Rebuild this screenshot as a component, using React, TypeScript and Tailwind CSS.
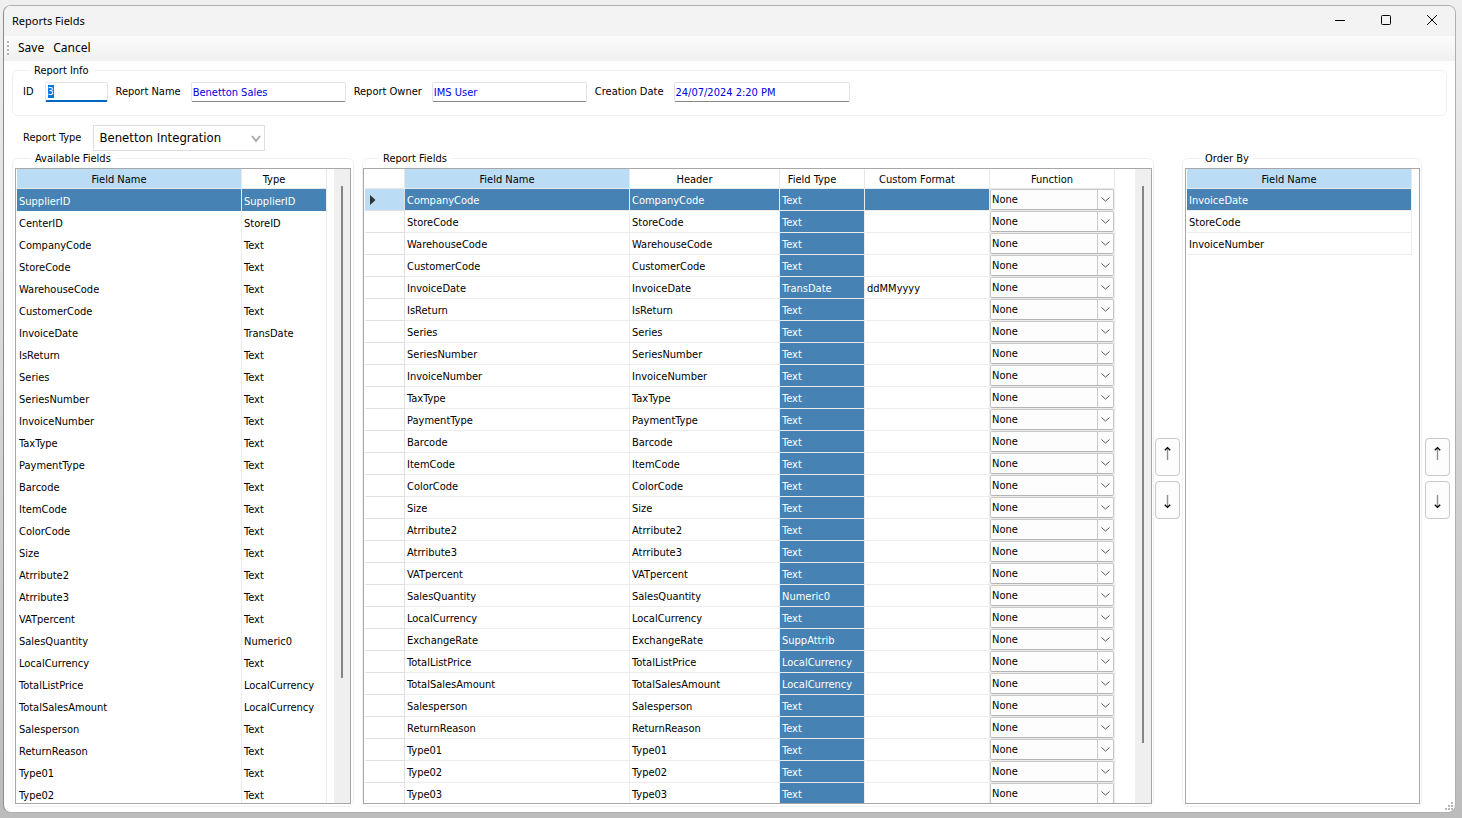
import React, { useEffect, useRef } from 'react';

const functions = ['None', 'Sum', 'Count', 'Average', 'Min', 'Max'];

const availableFields: [string, string][] = [
    ['SupplierID', 'SupplierID'],
    ['CenterID', 'StoreID'],
    ['CompanyCode', 'Text'],
    ['StoreCode', 'Text'],
    ['WarehouseCode', 'Text'],
    ['CustomerCode', 'Text'],
    ['InvoiceDate', 'TransDate'],
    ['IsReturn', 'Text'],
    ['Series', 'Text'],
    ['SeriesNumber', 'Text'],
    ['InvoiceNumber', 'Text'],
    ['TaxType', 'Text'],
    ['PaymentType', 'Text'],
    ['Barcode', 'Text'],
    ['ItemCode', 'Text'],
    ['ColorCode', 'Text'],
    ['Size', 'Text'],
    ['Atrribute2', 'Text'],
    ['Atrribute3', 'Text'],
    ['VATpercent', 'Text'],
    ['SalesQuantity', 'Numeric0'],
    ['LocalCurrency', 'Text'],
    ['TotalListPrice', 'LocalCurrency'],
    ['TotalSalesAmount', 'LocalCurrency'],
    ['Salesperson', 'Text'],
    ['ReturnReason', 'Text'],
    ['Type01', 'Text'],
    ['Type02', 'Text'],
];

const reportFields: { name: string; type: string; format?: string }[] = [
    { name: 'CompanyCode', type: 'Text' },
    { name: 'StoreCode', type: 'Text' },
    { name: 'WarehouseCode', type: 'Text' },
    { name: 'CustomerCode', type: 'Text' },
    { name: 'InvoiceDate', type: 'TransDate', format: 'ddMMyyyy' },
    { name: 'IsReturn', type: 'Text' },
    { name: 'Series', type: 'Text' },
    { name: 'SeriesNumber', type: 'Text' },
    { name: 'InvoiceNumber', type: 'Text' },
    { name: 'TaxType', type: 'Text' },
    { name: 'PaymentType', type: 'Text' },
    { name: 'Barcode', type: 'Text' },
    { name: 'ItemCode', type: 'Text' },
    { name: 'ColorCode', type: 'Text' },
    { name: 'Size', type: 'Text' },
    { name: 'Atrribute2', type: 'Text' },
    { name: 'Atrribute3', type: 'Text' },
    { name: 'VATpercent', type: 'Text' },
    { name: 'SalesQuantity', type: 'Numeric0' },
    { name: 'LocalCurrency', type: 'Text' },
    { name: 'ExchangeRate', type: 'SuppAttrib' },
    { name: 'TotalListPrice', type: 'LocalCurrency' },
    { name: 'TotalSalesAmount', type: 'LocalCurrency' },
    { name: 'Salesperson', type: 'Text' },
    { name: 'ReturnReason', type: 'Text' },
    { name: 'Type01', type: 'Text' },
    { name: 'Type02', type: 'Text' },
    { name: 'Type03', type: 'Text' },
];

const orderBy = ['InvoiceDate', 'StoreCode', 'InvoiceNumber'];

const Th: React.FC<{
    active?: boolean;
    sortable?: boolean;
    children?: React.ReactNode;
}> = ({ active, sortable = true, children }) => (
    <th
        className={`h-5 border-r border-b border-[#e8e8e8] p-0 pt-[3px] text-center leading-4 font-normal ${
            sortable ? 'pr-5' : ''
        } ${active ? 'bg-[#badcf4]' : 'bg-white'}`}
    >
        {children}
    </th>
);

const Td: React.FC<{
    selected?: boolean;
    lines?: boolean;
    children?: React.ReactNode;
}> = ({ selected, lines = true, children }) => (
    <td
        className={`h-[22px] border-r border-[#ececec] p-0 pl-0.5 leading-4 whitespace-nowrap ${
            lines ? 'border-b pt-[3px]' : 'pt-1'
        } ${selected ? 'bg-[#4682b4] text-white' : ''}`}
    >
        {children}
    </td>
);

const ScrollBar: React.FC<{ thumb: string }> = ({ thumb }) => (
    <div className="flex w-4 shrink-0 justify-center bg-[#efefef] pt-[17px]">
        <div className={`w-0.5 bg-[#858585] ${thumb}`} />
    </div>
);

const Group: React.FC<{
    title: string;
    className: string;
    children: React.ReactNode;
}> = ({ title, className, children }) => (
    <fieldset
        className={`flex min-h-0 min-w-0 flex-col rounded-md border border-[#f0f0f0] pt-[3px] pb-0.5 ${className}`}
    >
        <legend className="ml-4 px-1 pt-0.5 leading-3">{title}</legend>
        <div className="flex min-h-0 flex-1 overflow-hidden border border-[#a8a8a8] pl-px">
            {children}
        </div>
    </fieldset>
);

const InfoField: React.FC<{
    id: string;
    label: string;
    value: string;
    width: string;
}> = ({ id, label, value, width }) => (
    <div className="flex items-center gap-2.5">
        <label htmlFor={id}>{label}</label>
        <input
            id={id}
            defaultValue={value}
            className={`h-5 rounded-xs border border-[#e5e5e5] border-b-[#868686] bg-white px-px text-[#0000e0] outline-none ${width}`}
        />
    </div>
);

const FunctionSelect: React.FC<{ label: string }> = ({ label }) => (
    <div className="relative h-[21px] w-[124px]">
        <select
            aria-label={label}
            className="h-full w-full appearance-none rounded-xs border border-[#c8c8c8] border-b-[#b4b4b4] bg-[#fdfdfd] px-px pt-0.5 outline-none"
        >
            {functions.map((name) => (
                <option key={name}>{name}</option>
            ))}
        </select>
        <span className="pointer-events-none absolute inset-y-px right-px flex w-4 items-center justify-center border-l border-[#c8c8c8]">
            <svg
                width="9"
                height="5"
                viewBox="0 0 9 5"
                fill="none"
                stroke="#555"
            >
                <path d="M.5.5l4 3.6 4-3.6" />
            </svg>
        </span>
    </div>
);

const MoveButtons: React.FC = () => (
    <div className="mx-px flex w-[25px] shrink-0 flex-col justify-center gap-[5px] pb-0.5">
        <button
            aria-label="Move up"
            className="flex h-[38px] items-start justify-center rounded border border-[#c8c8c8] bg-[#fdfdfd] pt-[7px]"
        >
            <svg width="9" height="14" viewBox="0 0 9 14">
                <path d="M4.5 2v12" stroke="#8a9494" strokeWidth="1.4" />
                <path
                    d="M1.8 4.2l2.7-2.6 2.7 2.6"
                    fill="none"
                    stroke="#000"
                    strokeWidth="1.4"
                />
            </svg>
        </button>
        <button
            aria-label="Move down"
            className="flex h-[38px] items-end justify-center rounded border border-[#c8c8c8] bg-[#fdfdfd] pb-[9px]"
        >
            <svg width="9" height="14" viewBox="0 0 9 14">
                <path d="M4.5 0v12" stroke="#8a9494" strokeWidth="1.4" />
                <path
                    d="M1.8 9.8l2.7 2.6 2.7-2.6"
                    fill="none"
                    stroke="#000"
                    strokeWidth="1.4"
                />
            </svg>
        </button>
    </div>
);

const TitleBar: React.FC = () => (
    <header className="flex h-[30px] shrink-0 items-center justify-between bg-[#f3f3f3] pl-2 font-['Noto_Sans',sans-serif]">
        <h1>Reports Fields</h1>
        <div className="flex h-full">
            <button
                aria-label="Minimize"
                className="flex w-[46px] items-center justify-center pb-0.5"
            >
                <svg width="10" height="10" stroke="#000">
                    <path d="M0 5.5h10" />
                </svg>
            </button>
            <button
                aria-label="Maximize"
                className="flex w-[46px] items-center justify-center pb-0.5"
            >
                <svg width="10" height="10" fill="none" stroke="#000">
                    <rect x=".5" y=".5" width="9" height="9" rx="1" />
                </svg>
            </button>
            <button
                aria-label="Close"
                className="flex w-[46px] items-center justify-center pb-0.5"
            >
                <svg width="10" height="10" stroke="#000">
                    <path d="M0 0l10 10M10 0L0 10" />
                </svg>
            </button>
        </div>
    </header>
);

const App: React.FC = () => {
    const idRef = useRef<HTMLInputElement>(null);

    useEffect(() => {
        idRef.current?.focus();
        idRef.current?.select();
    }, []);

    return (
        <div className="flex h-screen flex-col bg-linear-to-b from-[#efefef] to-[#bcbcbc] pt-[5px] pr-1.5 pb-[5px] pl-[3px] font-['DejaVu_Sans_Condensed','DejaVu_Sans',sans-serif] text-[11px] text-black">
            <div className="relative flex min-h-0 flex-1 flex-col overflow-hidden rounded-lg border border-[#b0b0b0] border-l-[#8c8c8c] bg-white">
                <TitleBar />

                <nav className="flex h-[25px] shrink-0 items-center bg-linear-to-b from-[#fcfcfc] to-[#f0f0f0] pb-px pl-[3px] font-['Noto_Sans',sans-serif] text-xs">
                    <div className="mr-[9px] h-3.5 w-0.5 bg-[repeating-linear-gradient(#b4b4b4_0_2px,transparent_2px_4px)]" />
                    <button className="mr-[9px]">Save</button>
                    <button>Cancel</button>
                </nav>

                <main className="flex min-h-0 flex-1 flex-col px-2 pt-0.5 pb-[5px]">
                    <fieldset className="flex shrink-0 gap-2 rounded-md border border-[#f0f0f0] px-2.5 pt-[5px] pb-[13px]">
                        <legend className="ml-[7px] px-1 pt-0.5 leading-3">
                            Report Info
                        </legend>
                        <div className="flex items-center gap-[11px]">
                            <label htmlFor="report-id">ID</label>
                            <input
                                id="report-id"
                                ref={idRef}
                                defaultValue="3"
                                className="h-5 w-[63px] rounded-xs border border-b-2 border-[#e5e5e5] border-b-[#0067c0] bg-white px-0.5 text-[#0000e0] outline-none selection:bg-[#0078d7] selection:text-white"
                            />
                        </div>
                        <InfoField
                            id="report-name"
                            label="Report Name"
                            value="Benetton Sales"
                            width="w-[155px]"
                        />
                        <InfoField
                            id="report-owner"
                            label="Report Owner"
                            value="IMS User"
                            width="w-[155px]"
                        />
                        <InfoField
                            id="creation-date"
                            label="Creation Date"
                            value="24/07/2024 2:20 PM"
                            width="w-[176px]"
                        />
                    </fieldset>

                    <div className="mt-[9px] flex shrink-0 items-center gap-3 pl-[11px]">
                        <label htmlFor="report-type">Report Type</label>
                        <div className="relative h-[26px] w-[172px]">
                            <select
                                id="report-type"
                                className="h-full w-full appearance-none border border-[#dedede] bg-white px-[5px] text-[13px] outline-none"
                            >
                                <option>Benetton Integration</option>
                            </select>
                            <svg
                                className="pointer-events-none absolute top-2.5 right-1"
                                width="10"
                                height="8"
                                viewBox="0 0 10 8"
                                fill="none"
                                stroke="#a8a8a8"
                                strokeWidth="1.8"
                            >
                                <path d="M1 1l4 5 4-5" />
                            </svg>
                        </div>
                    </div>

                    <div className="flex min-h-0 flex-1">
                        <Group
                            title="Available Fields"
                            className="mr-2 w-[342px] shrink-0 px-0.5"
                        >
                            <div className="flex-1">
                                <table className="w-[310px] table-fixed border-separate border-spacing-0">
                                    <colgroup>
                                        <col className="w-[225px]" />
                                        <col className="w-[85px]" />
                                    </colgroup>
                                    <thead>
                                        <tr>
                                            <Th active>Field Name</Th>
                                            <Th>Type</Th>
                                        </tr>
                                    </thead>
                                    <tbody>
                                        {availableFields.map(
                                            ([name, type], i) => (
                                                <tr key={name}>
                                                    <Td
                                                        lines={false}
                                                        selected={i === 0}
                                                    >
                                                        {name}
                                                    </Td>
                                                    <Td
                                                        lines={false}
                                                        selected={i === 0}
                                                    >
                                                        {type}
                                                    </Td>
                                                </tr>
                                            )
                                        )}
                                    </tbody>
                                </table>
                            </div>
                            <ScrollBar thumb="h-[492px]" />
                        </Group>

                        <Group title="Report Fields" className="flex-1 pr-px">
                            <div className="flex-1">
                                <table className="w-[750px] table-fixed border-separate border-spacing-0">
                                    <colgroup>
                                        <col className="w-10" />
                                        <col className="w-[225px]" />
                                        <col className="w-[150px]" />
                                        <col className="w-[85px]" />
                                        <col className="w-[125px]" />
                                        <col className="w-[125px]" />
                                    </colgroup>
                                    <thead>
                                        <tr>
                                            <Th />
                                            <Th active>Field Name</Th>
                                            <Th>Header</Th>
                                            <Th>Field Type</Th>
                                            <Th>Custom Format</Th>
                                            <Th sortable={false}>Function</Th>
                                        </tr>
                                    </thead>
                                    <tbody>
                                        {reportFields.map((field, i) => (
                                            <tr key={field.name}>
                                                <td
                                                    className={`h-[22px] border-r border-b border-[#e0e0e0] p-0 pl-[5px] ${
                                                        i === 0
                                                            ? 'bg-[#badcf4]'
                                                            : ''
                                                    }`}
                                                >
                                                    {i === 0 && (
                                                        <svg
                                                            width="6"
                                                            height="10"
                                                            fill="#333"
                                                        >
                                                            <path d="M0 0l5.5 5L0 10z" />
                                                        </svg>
                                                    )}
                                                </td>
                                                <Td selected={i === 0}>
                                                    {field.name}
                                                </Td>
                                                <Td selected={i === 0}>
                                                    {field.name}
                                                </Td>
                                                <Td selected>{field.type}</Td>
                                                <Td selected={i === 0}>
                                                    {field.format}
                                                </Td>
                                                <td className="h-[22px] border-r border-b border-[#ececec] p-0">
                                                    <FunctionSelect
                                                        label={`${field.name} function`}
                                                    />
                                                </td>
                                            </tr>
                                        ))}
                                    </tbody>
                                </table>
                            </div>
                            <ScrollBar thumb="h-[557px]" />
                        </Group>

                        <MoveButtons />

                        <Group
                            title="Order By"
                            className="ml-px w-60 shrink-0 pr-px pl-0.5"
                        >
                            <div className="flex-1">
                                <table className="w-[225px] table-fixed border-separate border-spacing-0">
                                    <thead>
                                        <tr>
                                            <Th active>Field Name</Th>
                                        </tr>
                                    </thead>
                                    <tbody>
                                        {orderBy.map((name, i) => (
                                            <tr key={name}>
                                                <Td selected={i === 0}>
                                                    {name}
                                                </Td>
                                            </tr>
                                        ))}
                                    </tbody>
                                </table>
                            </div>
                        </Group>

                        <div className="-mr-1 flex pl-0.5">
                            <MoveButtons />
                        </div>
                    </div>
                </main>

                <svg
                    className="absolute right-0.5 bottom-0.5"
                    width="8"
                    height="8"
                    fill="#b8b8b8"
                >
                    <path d="M6 0h2v2H6zM3 3h2v2H3zM6 3h2v2H6zM0 6h2v2H0zM3 6h2v2H3zM6 6h2v2H6z" />
                </svg>
            </div>
        </div>
    );
};

export default App;
